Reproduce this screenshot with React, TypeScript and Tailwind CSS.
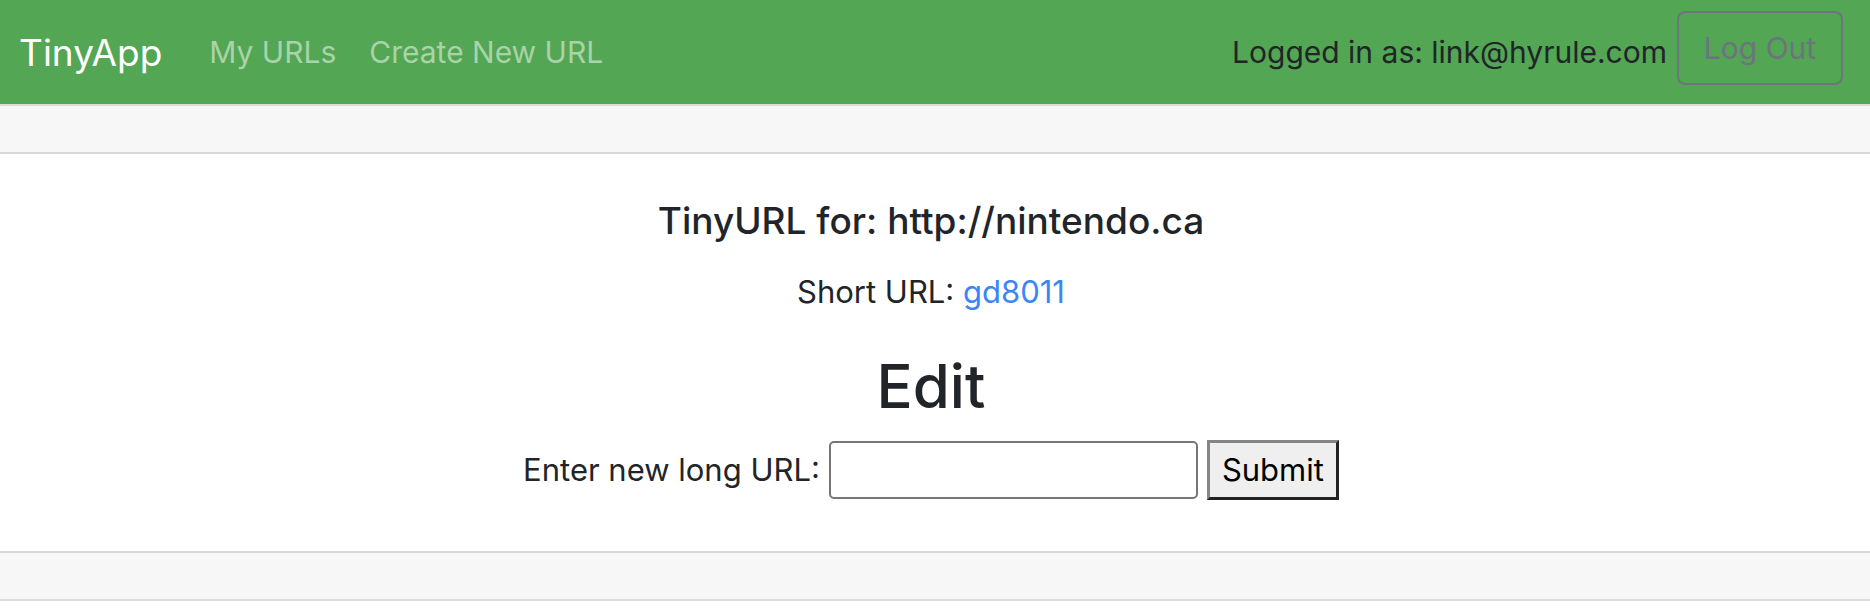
const App = () => {
  return (
    <div className="min-h-screen bg-white font-['Inter',sans-serif] text-[#212529]">
      {/* navbar */}
      <nav className="h-[104px] bg-[#53a653] flex items-center pl-[19px] pr-[27px]">
        <a href="#" className="text-white text-[37px] leading-none">
          TinyApp
        </a>
        <div className="flex items-center ml-[47px] gap-[33px] text-[30px] text-[#a9d3a9]">
          <a href="#">My URLs</a>
          <a href="#">Create New URL</a>
        </div>
        <div className="ml-auto flex items-center gap-[10px] text-[30px]">
          <span>Logged in as: link@hyrule.com</span>
          <button className="w-[166px] h-[74px] mb-[8px] border-2 border-[#6c757d] rounded-[8px] text-[#6c757d] text-[30px]">
            Log Out
          </button>
        </div>
      </nav>

      {/* card */}
      <div className="border-y-2 border-[#dcdcdc]">
        <div className="h-[48px] bg-[#f7f7f7] border-b-2 border-[#d8d8d8]" />
        <div className="h-[397px] pt-[43px] pr-[8px] flex flex-col items-center text-center">
          <h5 className="text-[37px] leading-[48px] font-medium mb-[23px]">
            TinyURL for: http://nintendo.ca
          </h5>
          <p className="text-[31px] leading-[48px] mb-[32px]">
            Short URL:{' '}
            <a href="#" className="text-[#3a86f5]">
              gd8011
            </a>
          </p>
          <h2 className="text-[60px] leading-[77px] font-medium mb-[15px]">Edit</h2>
          <form className="flex items-center gap-[9px] text-[31px]">
            <label>Enter new long URL:</label>
            <input
              type="text"
              className="w-[369px] h-[58px] border-2 border-[#767676] rounded-[5px] bg-white px-2"
            />
            <button
              type="button"
              className="h-[60px] px-[12px] bg-[#efefef] border-[3px] border-t-[#858585] border-l-[#858585] border-r-[#222222] border-b-[#222222] text-black text-[31px]"
            >
              Submit
            </button>
          </form>
        </div>
        <div className="h-[48px] bg-[#f7f7f7] border-t-2 border-[#d8d8d8]" />
      </div>
    </div>
  );
};

export default App;
